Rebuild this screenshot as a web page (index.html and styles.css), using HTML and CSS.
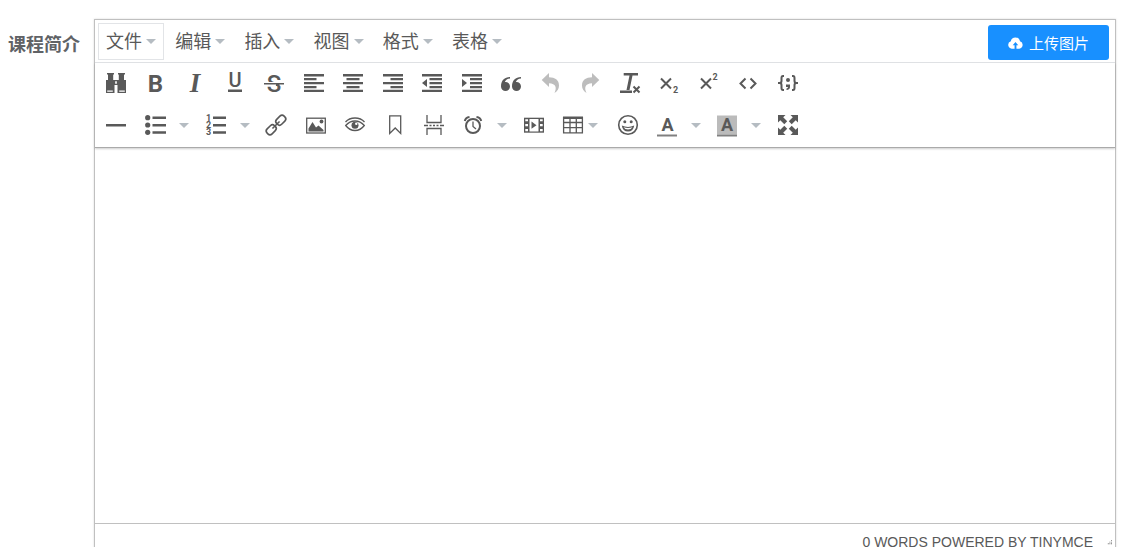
FILE: index.html
```html
<!DOCTYPE html>
<html lang="zh-CN">
<head>
    <meta charset="UTF-8">
    <meta name="viewport" content="width=device-width, initial-scale=1.0">
    <title>课程简介</title>
    <link rel="stylesheet" href="styles.css">
</head>
<body>
    <form class="form-item">
        <label class="form-label" for="intro">课程简介</label>

        <div class="editor">
            <!-- Menu -->
            <div class="menubar">
                <div class="menus">
                    <button type="button" class="menu active">文件<span class="caret"></span></button>
                    <button type="button" class="menu">编辑<span class="caret"></span></button>
                    <button type="button" class="menu">插入<span class="caret"></span></button>
                    <button type="button" class="menu">视图<span class="caret"></span></button>
                    <button type="button" class="menu">格式<span class="caret"></span></button>
                    <button type="button" class="menu">表格<span class="caret"></span></button>
                </div>
                <button type="button" class="upload">
                    <svg class="cloud" viewBox="0 0 16 12"><path d="M4 12a4 4 0 0 1-1-7.800A5 5 0 0 1 12.800 4.200 4 4 0 0 1 12 12H9V8.500h2L8 5 5 8.500h2V12z"/></svg>
                    上传图片
                </button>
            </div>

            <!-- Toolbar -->
            <div class="toolbar">
                <div class="row">
                    <button type="button" class="tool" aria-label="查找和替换"><svg class="icon" viewBox="0 0 20 20"><path d="M1 0h7v1.500h-.8V7h5.600V1.500H12V0h7v1.500h-1V7h2v13h-8.500v-8h-3v8H0V7h2V1.500H1z"/><path class="cut" d="M1.200 17.500h5.600v1.300H1.200zM13.200 17.500h5.600v1.300h-5.600zM9.200 8.300h1.600v2.400H9.200z"/></svg></button>
                    <button type="button" class="tool" aria-label="粗体"><svg class="icon" viewBox="0 0 20 20"><text class="glyph" x="9.500" y="18.500" font-size="24">B</text></svg></button>
                    <button type="button" class="tool" aria-label="斜体"><svg class="icon" viewBox="0 0 20 20"><text class="glyph serif" x="10" y="18.700" font-size="27">I</text></svg></button>
                    <button type="button" class="tool" aria-label="下划线"><svg class="icon" viewBox="0 0 20 20"><text class="glyph medium" x="10" y="14.300" font-size="20">U</text><path d="M3 16.500h14V19H3z"/></svg></button>
                    <button type="button" class="tool" aria-label="删除线"><svg class="icon" viewBox="0 0 20 20"><text class="glyph medium" x="10" y="18.500" font-size="24">S</text><path class="cut" d="M0 9h20v3.500H0z"/><path d="M0 10h20v1.500H0zM12 11.500h3.500V13H12z"/></svg></button>
                    <button type="button" class="tool" aria-label="左对齐"><svg class="icon" viewBox="0 0 20 20"><path d="M0 1h20v2.500H0zM0 5h12.500v2.200H0zM0 9h20v2.200H0zM0 13h12.500v2.200H0zM0 16.700h20V19H0z"/></svg></button>
                    <button type="button" class="tool" aria-label="居中"><svg class="icon" viewBox="0 0 20 20"><path d="M0 1h20v2.500H0zM3.500 5h13v2.200h-13zM0 9h20v2.200H0zM3.500 13h13v2.200h-13zM0 16.700h20V19H0z"/></svg></button>
                    <button type="button" class="tool" aria-label="右对齐"><svg class="icon" viewBox="0 0 20 20"><path d="M0 1h20v2.500H0zM7.500 5H20v2.200H7.500zM0 9h20v2.200H0zM7.500 13H20v2.200H7.500zM0 16.700h20V19H0z"/></svg></button>
                    <button type="button" class="tool" aria-label="减少缩进"><svg class="icon" viewBox="0 0 20 20"><path d="M0 1h20v2.500H0zM7.500 5H20v2.200H7.500zM7.500 9H20v2.200H7.500zM7.500 13H20v2.200H7.500zM0 16.700h20V19H0zM5 6v8l-5-4z"/></svg></button>
                    <button type="button" class="tool" aria-label="增加缩进"><svg class="icon" viewBox="0 0 20 20"><path d="M0 1h20v2.500H0zM8 5h12v2.200H8zM8 9h12v2.200H8zM8 13h12v2.200H8zM0 16.700h20V19H0zM0 6v8l5-4z"/></svg></button>
                    <button type="button" class="tool" aria-label="引用"><svg class="icon" viewBox="0 0 20 20"><path d="M9 4C3.500 4 0 7.500 0 13.500a4.500 4.500 0 1 0 4.500-4.500H3.800C4.500 7 6.500 5.700 9 5.500zM20 4c-5.500 0-9 3.500-9 9.500A4.500 4.500 0 1 0 15.500 9h-.7c.7-2 2.700-3.300 5.200-3.500z"/></svg></button>
                    <button type="button" class="tool" aria-label="撤销" disabled><svg class="icon" viewBox="0 0 20 20"><path d="M8 0v4.300c6 0 10 2.700 10 8.200 0 3-1.500 5.500-4.500 7.500 2.500-5 1.500-9.500-5.500-9.700V14L.7 7z"/></svg></button>
                    <button type="button" class="tool" aria-label="重做" disabled><svg class="icon" viewBox="0 0 20 20"><path d="M12 0v4.300C6 4.300 2 7 2 12.500c0 3 1.500 5.500 4.500 7.500C4 15 5 10.500 12 10.300V14l7.300-7z"/></svg></button>
                    <button type="button" class="tool" aria-label="清除格式"><svg class="icon" viewBox="0 0 20 20"><path d="M3.700 0H18v2.500H3.700zM9.500 2.500h3L9.500 17h-3zM0 17.500h12V20H0z"/><path class="line bold" d="M13.500 13.500l6 6M19.500 13.500l-6 6"/></svg></button>
                    <button type="button" class="tool" aria-label="下标"><svg class="icon" viewBox="0 0 20 20"><path class="line bold" d="M2 5.500l10 10M12 5.500l-10 10"/><text class="glyph" x="16.500" y="20" font-size="9">2</text></svg></button>
                    <button type="button" class="tool" aria-label="上标"><svg class="icon" viewBox="0 0 20 20"><path class="line bold" d="M2 5.500l10 10M12 5.500l-10 10"/><text class="glyph" x="16" y="6.500" font-size="9">2</text></svg></button>
                    <button type="button" class="tool" aria-label="源代码"><svg class="icon" viewBox="0 0 20 20"><path class="line bold" d="M7.500 5.500L2.500 10.500l5 5M12.500 5.500l5 5-5 5"/></svg></button>
                    <button type="button" class="tool" aria-label="代码示例"><svg class="icon" viewBox="0 0 20 20"><path class="line bold" d="M6 3H5Q3.500 3 3.500 5v3q0 2-2 2H0h1.500q2 0 2 2v3q0 2 1.500 2h1M14 3h1q1.500 0 1.500 2v3q0 2 2 2H20h-1.500q-2 0-2 2v3q0 2-1.500 2h-1"/><circle cx="10" cy="7" r="2"/><path d="M8 11.500h4V14q0 2.500-3.500 3v-1.500q1.500-.3 1.500-1.500H8z"/></svg></button>
                </div>

                <div class="row">
                    <button type="button" class="tool" aria-label="水平线"><svg class="icon" viewBox="0 0 20 20"><path d="M0 9h20v2.500H0z"/></svg></button>
                    <div class="split">
                        <button type="button" class="tool" aria-label="项目符号"><svg class="icon" viewBox="0 0 20 20"><circle cx="2.700" cy="2.700" r="2.600"/><circle cx="2.700" cy="10" r="2.600"/><circle cx="2.700" cy="17.300" r="2.600"/><path d="M7.500 1.500H21V4H7.500zM7.500 9H21v2.500H7.500zM7.500 16.300H21v2.500H7.500z"/></svg></button>
                        <button type="button" class="open" aria-label="项目符号样式"><span class="caret"></span></button>
                    </div>
                    <div class="split">
                        <button type="button" class="tool" aria-label="编号"><svg class="icon" viewBox="0 0 20 20"><text class="glyph" x="2.500" y="6" font-size="9">1</text><text class="glyph" x="2.500" y="13" font-size="9">2</text><text class="glyph" x="2.500" y="20" font-size="9">3</text><path d="M7 1.500h13V4H7zM7 9h13v2.500H7zM7 16.300h13v2.500H7z"/></svg></button>
                        <button type="button" class="open" aria-label="编号样式"><span class="caret"></span></button>
                    </div>
                    <button type="button" class="tool" aria-label="链接"><svg class="icon" viewBox="0 0 20 20"><g class="line link" transform="rotate(-45 10 10)"><rect x="-2" y="6.500" width="10.500" height="7" rx="3"/><rect x="11.500" y="6.500" width="10.500" height="7" rx="3"/><path d="M5 10h10"/></g></svg></button>
                    <button type="button" class="tool" aria-label="图片"><svg class="icon" viewBox="0 0 20 20"><rect class="line" x=".7" y="3.200" width="18.600" height="14.800"/><path d="M2.500 16.500v-3L6.500 7l3.500 5.500 2.500-2 5 4.500v1.500z"/><circle cx="15.500" cy="6.500" r="1.900"/></svg></button>
                    <button type="button" class="tool" aria-label="预览"><svg class="icon" viewBox="0 0 20 20"><path class="line" d="M.5 7Q4 3 10 3t9.500 4M.7 10.500Q4.500 6 10 6t9.300 4.500Q15.500 15.500 10 15.500T.7 10.500z"/><circle cx="10" cy="10.300" r="3.500"/><circle class="cut" cx="11.300" cy="8.800" r="1.200"/></svg></button>
                    <button type="button" class="tool" aria-label="书签"><svg class="icon" viewBox="0 0 20 20"><path class="line" d="M4.700.8h11v17.700L10.200 13l-5.500 5.500z"/></svg></button>
                    <button type="button" class="tool" aria-label="分页符"><svg class="icon" viewBox="0 0 20 20"><path class="line" d="M3 0v7.500h14V0M3 20v-6.500h14V20M0 10.500h4M5.500 10.500h2M9 10.500h2M12.500 10.500h2M16 10.500h4"/></svg></button>
                    <div class="split">
                        <button type="button" class="tool" aria-label="日期时间"><svg class="icon" viewBox="0 0 20 20"><circle class="line bold" cx="10" cy="11" r="7"/><path class="line" d="M10 6.500v5l3 2.500"/><path class="line bold" d="M1.800 6Q2.500 2.500 6.500 2M18.200 6Q17.500 2.500 13.500 2"/></svg></button>
                        <button type="button" class="open" aria-label="日期格式"><span class="caret"></span></button>
                    </div>
                    <button type="button" class="tool" aria-label="视频"><svg class="icon" viewBox="0 0 20 20"><path d="M0 2.700h20v15H0z"/><path class="cut" d="M5.500 4h9v12.400h-9zM1.300 4.200h2.700v2H1.300zM1.300 9h2.700v2.200H1.300zM1.300 14h2.700v2.200H1.300zM16 4.200h2.700v2H16zM16 9h2.700v2.200H16zM16 14h2.700v2.200H16z"/><path d="M7.500 6.500v7.300l5-3.600z"/></svg></button>
                    <button type="button" class="tool table" aria-label="表格"><svg class="icon" viewBox="0 0 20 20"><path class="line" d="M.6 2v15.900h18.800V2M7 3v15M13.300 3v15M0 7.500h20M0 12.700h20"/><path d="M0 1.500h20V4H0z"/></svg><span class="caret"></span></button>
                    <button type="button" class="tool" aria-label="表情"><svg class="icon" viewBox="0 0 20 20"><circle class="line link" cx="10" cy="10" r="9.300"/><circle cx="6.800" cy="6.800" r="1.500"/><circle cx="13.200" cy="6.800" r="1.500"/><path d="M3.800 10.500q6.200 2.800 12.400 0-.8 6-6.200 6t-6.200-6z"/><path class="cut" d="M5.500 12.200q4.500 1.500 9 0-1.500 2.300-4.500 2.300t-4.500-2.300z"/></svg></button>
                    <div class="split">
                        <button type="button" class="tool" aria-label="文字颜色"><svg class="icon" viewBox="0 0 20 20"><text class="glyph" x="10.500" y="16" font-size="18">A</text><path class="swatch" d="M0 19.500h20v2H0z"/></svg></button>
                        <button type="button" class="open" aria-label="选择文字颜色"><span class="caret"></span></button>
                    </div>
                    <div class="split">
                        <button type="button" class="tool" aria-label="背景色"><svg class="icon" viewBox="0 0 20 20"><path class="shade" d="M0 .5h20v19H0z"/><text class="glyph" x="10" y="16" font-size="18">A</text><path class="swatch" d="M0 19.500h20v2H0z"/></svg></button>
                        <button type="button" class="open" aria-label="选择背景色"><span class="caret"></span></button>
                    </div>
                    <button type="button" class="tool" aria-label="全屏"><svg class="icon" viewBox="0 0 20 20"><path d="M0 0h7.500L5.200 2.300l4 4-2.900 2.900-4-4L0 7.500zM20 0v7.500l-2.300-2.300-4 4-2.900-2.900 4-4L12.500 0zM0 20v-7.500l2.300 2.300 4-4 2.900 2.900-4 4L7.500 20zM20 20h-7.500l2.300-2.300-4-4 2.900-2.900 4 4 2.300-2.300z"/></svg></button>
                </div>
            </div>

            <textarea class="content" id="intro"></textarea>

            <div class="statusbar">
                <span>0 WORDS POWERED BY TINYMCE</span>
                <svg class="resize" viewBox="0 0 12 12"><path d="M10 0h2v2h-2zM6 4h2v2H6zM10 4h2v2h-2zM2 8h2v2H2zM6 8h2v2H6zM10 8h2v2h-2z"/></svg>
            </div>
        </div>
    </form>
</body>
</html>
```
FILE: styles.css
```css
* {
    box-sizing: border-box;
}

body {
    margin: 0;
    background-color: #fff;
    color: #595959;
    font-family: "Liberation Sans", "Noto Sans CJK SC", sans-serif;
}

button {
    padding: 0;
    border: 1px solid transparent;
    background: none;
    color: inherit;
    font-family: inherit;
    cursor: pointer;
}

.form-item {
    display: flex;
    align-items: flex-start;
    padding: 19px 8px 0 0;
}

.form-label {
    width: 94px;
    padding: 8px 14px 0 0;
    color: #606266;
    font-size: 18px;
    font-weight: bold;
    line-height: 36px;
    text-align: right;
    white-space: nowrap;
}

.editor {
    flex: 1;
    border: 1px solid #c0c0c0;
    box-shadow: 0 0 2px rgba(0, 0, 0, 0.15);
}

/* Menu */
.menubar {
    display: flex;
    justify-content: space-between;
    align-items: flex-end;
    height: 43px;
    padding: 0 6px 2px 3px;
    border-bottom: 1px solid #e2e4e7;
}

.menus {
    display: flex;
    justify-content: space-between;
    width: 412px;
}

.menu {
    display: flex;
    align-items: center;
    gap: 4px;
    height: 37px;
    padding: 0 7px;
    font-size: 18px;
    line-height: 34px;
}

.menu.active {
    border-color: #e2e4e7;
}

.caret {
    border: 5px solid transparent;
    border-top-color: #b5bcc2;
    border-bottom-width: 0;
}

.upload {
    display: flex;
    align-items: center;
    justify-content: center;
    gap: 6px;
    width: 121px;
    height: 35px;
    border: none;
    border-radius: 3px;
    background-color: #1890ff;
    color: #fff;
    font-size: 15px;
}

.cloud {
    width: 15px;
    height: 12px;
    fill: #fff;
}

/* Toolbar */
.toolbar {
    display: flex;
    flex-direction: column;
    gap: 4px;
    padding: 1px 2px 3px;
    border-bottom: 1px solid #aaa;
    box-shadow: 0 1px 2px rgba(0, 0, 0, 0.2);
}

.row {
    display: flex;
    justify-content: space-between;
    width: 710px;
}

.split {
    display: flex;
}

.tool {
    display: flex;
    align-items: center;
    justify-content: center;
    width: 38px;
    height: 38px;
}

.tool.table {
    justify-content: flex-start;
    gap: 5px;
    width: 53px;
    padding-left: 8px;
}

.open {
    display: flex;
    align-items: center;
    width: 21px;
    padding-left: 4px;
}

.tool:hover,
.open:hover,
.menu:hover {
    border-color: #e2e4e7;
}

/* Icons */
.icon {
    flex: none;
    width: 20px;
    height: 20px;
    fill: #595959;
    overflow: visible;
}

.tool:disabled .icon {
    fill: #bdbdbd;
}

.line {
    fill: none;
    stroke: #595959;
    stroke-width: 1.3;
}

.line.link {
    stroke-width: 1.6;
}

.line.bold {
    stroke-width: 2;
}

.cut {
    fill: #fff;
}

.swatch {
    fill: #808080;
}

.shade {
    fill: #bbb;
}

.glyph {
    font-family: Roboto, sans-serif;
    font-weight: bold;
    text-anchor: middle;
}

.glyph.medium {
    font-weight: 500;
}

.glyph.serif {
    font-family: "Liberation Serif", serif;
    font-style: italic;
}

/* Content */
.content {
    display: block;
    width: 100%;
    height: 375px;
    padding: 10px;
    border: none;
    outline: none;
    background: transparent;
    font-size: 16px;
    resize: none;
}

.statusbar {
    display: flex;
    align-items: center;
    justify-content: flex-end;
    gap: 14px;
    height: 37px;
    padding-right: 3px;
    border-top: 1px solid #c0c0c0;
    font-size: 14px;
    line-height: 10px;
}

.resize {
    width: 5px;
    height: 5px;
    fill: #595959;
}
```
